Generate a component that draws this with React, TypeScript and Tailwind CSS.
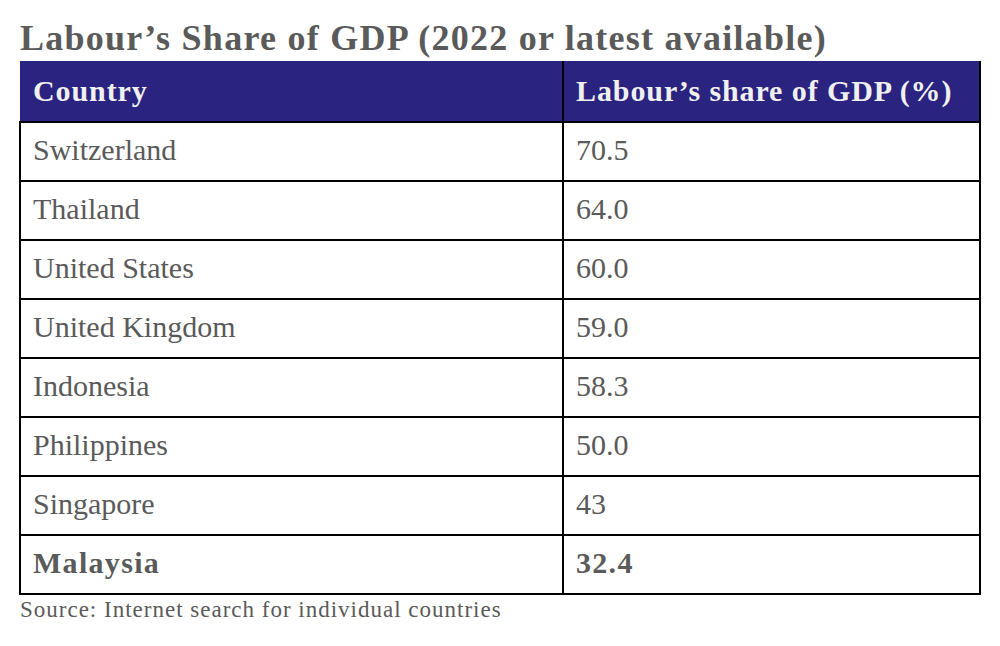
import React from "react";

const rows: [string, string][] = [
  ["Switzerland", "70.5"],
  ["Thailand", "64.0"],
  ["United States", "60.0"],
  ["United Kingdom", "59.0"],
  ["Indonesia", "58.3"],
  ["Philippines", "50.0"],
  ["Singapore", "43"],
];

export default function App() {
  return (
    <div
      className="w-[1000px] h-[646px] bg-white pt-[21px] pl-[19px]"
      style={{ fontFamily: '"Liberation Serif", "Times New Roman", serif' }}
    >
      <h1 className="text-[36px] leading-[35px] font-bold tracking-[1.25px] text-[#5a5a5a] pl-[1px]">
        Labour’s Share of GDP (2022 or latest available)
      </h1>
      <table className="mt-[5px] w-[962px] border-collapse text-[30px] text-[#5a5a5a]">
        <thead>
          <tr className="h-[61px] bg-[#2a2380] text-[#f0f0f0] tracking-[0.9px]">
            <th className="w-[543px] text-left font-bold pl-[13px] pb-[2px] border-r-2 border-black align-middle">
              Country
            </th>
            <th className="text-left font-bold pl-[12px] pb-[2px] border-r-2 border-black align-middle">
              Labour’s share of GDP (%)
            </th>
          </tr>
        </thead>
        <tbody>
          {rows.map(([c, v]) => (
            <tr key={c} className="h-[59px]">
              <td className="border-2 border-black pl-[12px] pb-[4px] align-middle">{c}</td>
              <td className="border-2 border-black pl-[12px] pb-[4px] align-middle">{v}</td>
            </tr>
          ))}
          <tr className="h-[59px] font-bold tracking-[1.3px]">
            <td className="border-2 border-black pl-[12px] pb-[4px] align-middle">Malaysia</td>
            <td className="border-2 border-black pl-[12px] pb-[4px] align-middle">32.4</td>
          </tr>
        </tbody>
      </table>
      <div className="mt-[3px] pl-[1px] text-[23px] leading-[24px] tracking-[1px] text-[#5a5a5a]">
        Source: Internet search for individual countries
      </div>
    </div>
  );
}
